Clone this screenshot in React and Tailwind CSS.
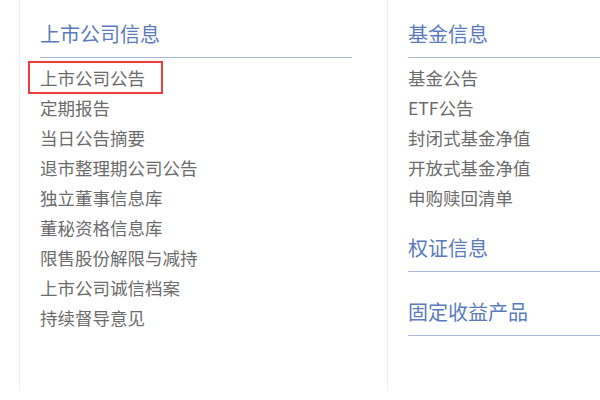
import React from 'react';

const leftItems = [
  '上市公司公告',
  '定期报告',
  '当日公告摘要',
  '退市整理期公司公告',
  '独立董事信息库',
  '董秘资格信息库',
  '限售股份解限与减持',
  '上市公司诚信档案',
  '持续督导意见',
];

const fundItems = ['基金公告', 'ETF公告', '封闭式基金净值', '开放式基金净值', '申购赎回清单'];

function Heading({ children, className = '' }) {
  return (
    <h2
      className={`text-[20px] leading-[30px] pb-[8px] border-b border-[#a9b8d8] text-[#5a7cbf] font-normal ${className}`}
    >
      {children}
    </h2>
  );
}

function ItemList({ items, highlightFirst }) {
  return (
    <ul className="mt-[5px]">
      {items.map((item, i) => (
        <li key={item} className="relative text-[17.5px] leading-[30px] text-[#6c6c6c]">
          {item}
          {highlightFirst && i === 0 && (
            <span className="absolute left-[-12px] top-[-2px] w-[135px] h-[33px] border-2 border-[#f23b3b]" />
          )}
        </li>
      ))}
    </ul>
  );
}

export default function App() {
  return (
    <div
      className="w-[600px] h-[400px] overflow-hidden bg-white flex items-start pl-[19px]"
      style={{ fontFamily: '"Microsoft YaHei", "Noto Sans CJK SC", "Noto Sans", sans-serif' }}
    >
      <section className="w-[368px] shrink-0 h-[391px] border-l border-[#efefef] pl-[20px] pr-[35px] pt-[19px]">
        <Heading>上市公司信息</Heading>
        <ItemList items={leftItems} highlightFirst />
      </section>

      <section className="w-[368px] shrink-0 h-[391px] border-l border-[#efefef] pl-[20px] pt-[19px]">
        <Heading>基金信息</Heading>
        <ItemList items={fundItems} />
        <Heading className="mt-[20px]">权证信息</Heading>
        <Heading className="mt-[25px]">固定收益产品</Heading>
      </section>
    </div>
  );
}
